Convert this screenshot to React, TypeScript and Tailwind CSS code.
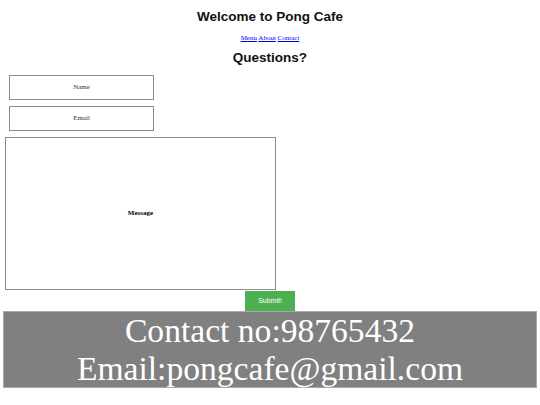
import React from "react";

export default function App() {
  return (
    <div className="w-[540px] h-[405px] bg-white overflow-hidden" style={{ fontFamily: '"Liberation Serif", serif' }}>
      <h1 className="pt-[8px] text-center text-[13.5px] leading-[17px] font-bold text-[#111]" style={{ fontFamily: '"Liberation Sans", Arial, sans-serif' }}>
        Welcome to Pong Cafe
      </h1>
      <nav className="mt-[9px] text-center text-[7px] leading-[8px]">
        <a className="text-[#0000ee] underline">Menu</a> <a className="text-[#0000ee] underline">About</a>{" "}
        <a className="text-[#0000ee] underline">Contact</a>
      </nav>
      <h2 className="mt-[7px] text-center text-[13.5px] leading-[18px] font-bold text-[#111]" style={{ fontFamily: '"Liberation Sans", Arial, sans-serif' }}>
        Questions?
      </h2>
      <div className="mt-[8px] ml-[9px] w-[145px] h-[25px] border-[1.5px] border-[#8c8c8c] flex items-center justify-center text-[7px] text-[#333]">
        Name
      </div>
      <div className="mt-[6px] ml-[9px] w-[145px] h-[25px] border-[1.5px] border-[#8c8c8c] flex items-center justify-center text-[7px] text-[#333]">
        Email
      </div>
      <div className="mt-[6px] ml-[5px] w-[271px] h-[153px] border-[1.5px] border-[#8c8c8c] flex items-center justify-center text-[7px] font-bold text-black">
        Message
      </div>
      <div className="flex justify-center mt-[1px]">
        <button className="w-[50px] h-[20px] bg-[#4caf50] text-white text-[7px]" style={{ fontFamily: '"Liberation Sans", Arial, sans-serif' }}>
          Submit!
        </button>
      </div>
      <footer className="mx-[3px] bg-[#808080] border border-[#a8a8a8] text-white text-center text-[33.6px] leading-[37.5px]">
        <div>Contact no:98765432</div>
        <div>Email:pongcafe@gmail.com</div>
      </footer>
    </div>
  );
}
